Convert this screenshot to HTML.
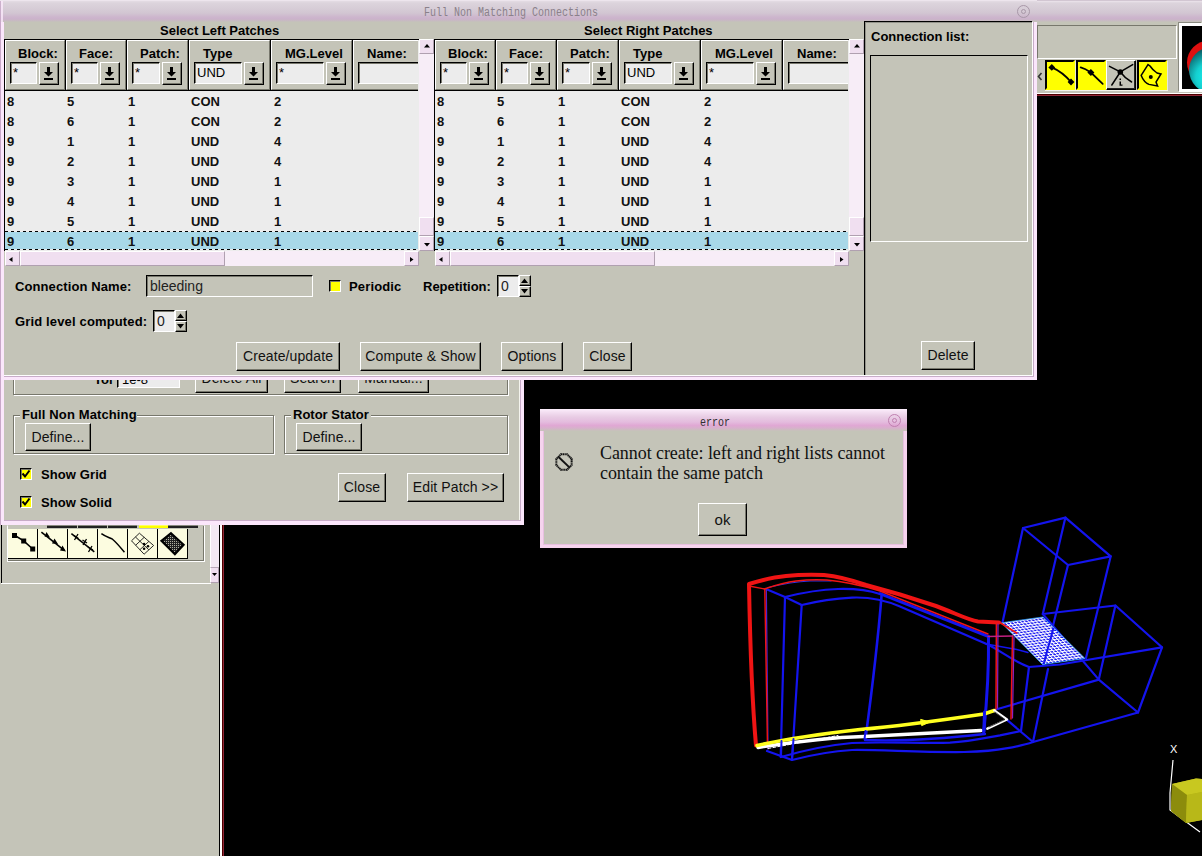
<!DOCTYPE html>
<html><head><meta charset="utf-8"><title>Full Non Matching Connections</title>
<style>
*{box-sizing:border-box;margin:0;padding:0}
html,body{width:1202px;height:856px;overflow:hidden;background:#c4c4b8}
body{position:relative;font-family:"Liberation Sans",sans-serif;font-size:13px;color:#000}
.a{position:absolute}
.b{position:absolute;font-weight:bold;font-size:13px;white-space:nowrap;line-height:15px}
.btn{position:absolute;background:#c4c4b8;border:1px solid;border-color:#fff #000 #000 #fff;box-shadow:inset -1px -1px 0 #77776c;font-size:14px;text-align:center;white-space:nowrap;color:#111;letter-spacing:0.1px}
.sunk{position:absolute;background:#ececec;border:1px solid;border-color:#000 #fff #fff #000;box-shadow:inset 1px 1px 0 #77776c;font-size:13px;white-space:nowrap;overflow:hidden}
.hc{position:absolute;top:40px;height:50px;background:#c4c4b8;border:1px solid;border-color:#fff #77776c #77776c #fff}
.pb{position:absolute;background:#f0dff0;border:1px solid;border-color:#fff #b0a0b0 #b0a0b0 #fff}
.trk{position:absolute;background:#f7edf7}
.row{position:absolute;left:0;width:100%;height:20px;font-weight:bold;font-size:13px;line-height:20px;white-space:nowrap;color:#111}
.row span{position:absolute;top:0}
.grp{position:absolute;border:1px solid;border-color:#77776c #fff #fff #77776c;box-shadow:inset 1px 1px 0 #fff,1px 1px 0 #fff inset}
.groove{position:absolute;border:1px solid #77776c;box-shadow:1px 1px 0 #fff,inset 1px 1px 0 #fff}
.mono{position:absolute;font-family:"Liberation Mono",monospace;font-size:12px;line-height:14px;white-space:nowrap;transform:scaleX(0.8333);transform-origin:0 0}
.chk{position:absolute;width:12px;height:12px;background:#ffff00;border:1px solid;border-color:#000 #fff #fff #000;box-shadow:inset 1px 1px 0 #77776c}
</style></head>
<body>
<div class="a" style="left:1037px;top:0;width:165px;height:22px;background:linear-gradient(#b8a8b8 0,#ece4ec 1px,#dcd4dc 3px,#d2c6d2 13px,#cdb6cd 17px,#cbb2cb 19px,#c6bcc0 21px,#c4c4b8 22px)"></div>
<div class="a" style="left:1037px;top:25px;width:140px;height:34px;border:1px solid;border-color:#77776c #fff #fff #77776c"></div>
<svg class="a" style="left:1037px;top:72px" width="6" height="9"><path d="M4.5 1L1.5 4.5L4.5 8" stroke="#333" stroke-width="1.6" fill="none"/></svg>
<div class="a" style="left:1045px;top:60px;width:30px;height:30px;background:#ffff00;border:2px solid;border-color:#000 #ffff00 #ffff00 #000;box-shadow:1px 1px 0 #e8e8d8"></div>
<div class="a" style="left:1076px;top:60px;width:30px;height:30px;background:#ffff00;border:2px solid;border-color:#000 #ffff00 #ffff00 #000;box-shadow:1px 1px 0 #e8e8d8"></div>
<div class="a" style="left:1106px;top:60px;width:30px;height:30px;background:#c4c4b8;border:1px solid;border-color:#fff #000 #000 #fff;box-shadow:inset -1px -1px 0 #222"></div>
<div class="a" style="left:1137px;top:60px;width:30px;height:30px;background:#ffff00;border:2px solid;border-color:#000 #ffff00 #ffff00 #000;box-shadow:1px 1px 0 #e8e8d8"></div>
<svg class="a" style="left:1045px;top:60px" width="125" height="30" viewBox="0 0 125 30">
<g stroke="#000" fill="none" stroke-width="1.8" stroke-linecap="round">
<path d="M6.8 7.4 C14 10.5 20 15 26 22"/>
<path d="M35.7 7.4 C40 8.5 43 10.5 45.9 12.5 L57.7 23.8"/>
<path d="M64.5 6.3 L75.3 12 L87.7 4.6 M75.3 12 L66.8 25 M75.3 12 C79 17 83 20 86.6 22" stroke-width="1.5"/>
<path d="M103 4.6 L96.2 15.4 C98 20 101 23 104 24.4 L112.6 26 L111 22 L116 14 L112 13 C109 11 107 9 105 6 Z" stroke-width="1.5"/>
</g>
<g fill="#000"><path d="M6.8 4l3.4 3.4-3.4 3.4-3.4-3.4z" /><path d="M26 18.6l3.4 3.4-3.4 3.4-3.4-3.4z"/><path d="M45.9 9l3.5 3.5-3.5 3.5-3.5-3.5z"/><circle cx="75.3" cy="12" r="2.8"/><circle cx="105.8" cy="17" r="2"/><rect x="74.5" y="18.5" width="1.5" height="1.5"/><path d="M74.5 21.5h1.5v3h1.5v1.2h-3z"/></g>
</svg>
<div class="a" style="left:1179px;top:23px;width:23px;height:69px;background:#000;border:3px solid #fff;border-right:0;box-shadow:-1px -1px 0 #8a8a80"></div>
<svg class="a" style="left:1182px;top:26px" width="20" height="63" viewBox="1182 26 20 63">
<defs><radialGradient id="gl" cx="0.45" cy="0.65" r="0.6"><stop offset="0" stop-color="#18f4f4"/><stop offset="0.5" stop-color="#14d0d0"/><stop offset="1" stop-color="#0c6068"/></radialGradient></defs>
<circle cx="1209" cy="62.5" r="22" fill="#e01010"/><circle cx="1212" cy="70" r="23" fill="url(#gl)"/></svg>
<div class="a" style="left:1045px;top:90px;width:123px;height:1px;background:#f4f4ec"></div>
<div class="a" style="left:1037px;top:93px;width:165px;height:1px;background:#fff"></div>
<div class="a" style="left:219px;top:96px;width:983px;height:760px;background:#000"></div>
<div class="a" style="left:1037px;top:94px;width:165px;height:1px;background:#500000"></div>
<div class="a" style="left:1037px;top:95px;width:165px;height:1px;background:#902838"></div>
<div class="a" style="left:220px;top:96px;width:2px;height:760px;background:#fff"></div>
<div class="a" style="left:222px;top:96px;width:1px;height:760px;background:#500000"></div>
<div class="a" style="left:223px;top:96px;width:1px;height:760px;background:#902838"></div>
<div class="a" style="left:1px;top:525px;width:1px;height:58px;background:#000"></div>
<div class="a" style="left:1px;top:583px;width:210px;height:1px;background:#fff"></div>
<div class="a" style="left:7px;top:525px;width:198px;height:37px;border:1px solid;border-color:transparent #fff #fff #fff;box-shadow:inset -1px -1px 0 #77776c"></div>
<div class="a" style="left:47px;top:525px;width:30px;height:3px;background:#222;border-top:1px solid #8a8a80"></div>
<div class="a" style="left:78px;top:525px;width:29px;height:3px;background:#222;border-top:1px solid #8a8a80"></div>
<div class="a" style="left:108px;top:525px;width:29px;height:3px;background:#222;border-top:1px solid #8a8a80"></div>
<div class="a" style="left:139px;top:525px;width:29px;height:3px;background:#ffff00;border-top:1px solid #ffff60"></div>
<div class="a" style="left:168px;top:525px;width:30px;height:3px;background:#222;border-top:1px solid #8a8a80"></div>
<div class="a" style="left:8px;top:529px;width:30px;height:30px;background:#fcfce0;border-right:1px solid #000;border-bottom:1px solid #000"></div>
<div class="a" style="left:38px;top:529px;width:30px;height:30px;background:#fcfce0;border-right:1px solid #000;border-bottom:1px solid #000"></div>
<div class="a" style="left:68px;top:529px;width:30px;height:30px;background:#fcfce0;border-right:1px solid #000;border-bottom:1px solid #000"></div>
<div class="a" style="left:98px;top:529px;width:30px;height:30px;background:#fcfce0;border-right:1px solid #000;border-bottom:1px solid #000"></div>
<div class="a" style="left:128px;top:529px;width:30px;height:30px;background:#fcfce0;border-right:1px solid #000;border-bottom:1px solid #000"></div>
<div class="a" style="left:158px;top:529px;width:30px;height:30px;background:#fcfce0;border-right:1px solid #000;border-bottom:1px solid #000"></div>
<svg class="a" style="left:8px;top:529px" width="180" height="30" viewBox="0 0 180 30">
<defs><pattern id="hz" width="2" height="2" patternUnits="userSpaceOnUse"><rect width="2" height="2" fill="#222"/><rect width="1" height="1" fill="#b0b0a0"/></pattern></defs>
<g stroke="#000" fill="none">
<path d="M6.5 6.3 L15.7 11.8 L24.7 20" stroke-width="1.6"/>
<path d="M33.4 3.1 L56.3 21.3" stroke-width="1.6"/>
<path d="M63.4 4.7 L86.3 22.9" stroke-width="1.5"/>
<path d="M66 6.5l4.5 3M70 5l-3.5 6 M74.5 11l4.5 3M78.5 10l-3.5 6 M80 18l5 3M84 17l-3.5 6" stroke-width="1.3"/>
<path d="M93.4 4.7 C98 8 101 8.5 104.5 10.2 C109 14 113 19 116.4 23.2" stroke-width="1.5"/>
<path d="M131.4 4.2 L145.6 16.5 L136.1 25.2 L123.5 11.8 Z M127.5 8 L140.8 20.8 M127.7 16.2 L136.2 8.3 M131.9 20.7 L140.9 12.4" stroke-width="0.9" stroke="#111"/>
<path d="M163 4.2 L175.6 15.8 L166.9 25.2 L153.5 11.8 Z" stroke-width="2.2" fill="url(#hz)"/>
</g>
<g fill="#000"><rect x="4" y="4" width="5" height="5"/><rect x="13.2" y="9.5" width="5" height="5"/><rect x="22.2" y="17.5" width="5" height="5"/>
<path d="M36.5 7.5l2-4.5 3.5 5.5z M44 14.5l2.5-5 3.5 5.5z M52 21.5l2.5-5 3.5 6z"/>
<circle cx="136.1" cy="15" r="1.3"/><circle cx="140" cy="17.3" r="1.3"/><circle cx="136.1" cy="19.7" r="1.3"/></g>
</svg>
<div class="a" style="left:210px;top:525px;width:9px;height:58px;background:#f3e8f3;border-left:1px solid #fff"></div>
<div class="a" style="left:210px;top:567px;width:9px;height:16px;background:#f0dff0;border:1px solid;border-color:#b8a8b8 #b0a0b0 #b0a0b0 #fff"></div>
<svg class="a" style="left:211px;top:572px" width="7" height="5"><path d="M1 1h5l-2.5 3z" fill="#000"/></svg>
<div class="a" style="left:0;top:370px;width:524px;height:155px;background:#c4c4b8;border:4px solid #fbe6fb;border-top:0"></div>
<div class="a" style="left:4px;top:520px;width:517px;height:1px;background:#c8acc8"></div>
<div class="a" style="left:520px;top:370px;width:1px;height:151px;background:#c8acc8"></div>
<div class="a" style="left:519px;top:370px;width:1px;height:150px;background:#f4f4ee"></div>
<div class="a" style="left:0;top:370px;width:1px;height:155px;background:#c8a8c8"></div>
<div class="groove" style="left:13px;top:360px;width:495px;height:35px"></div>
<div class="b" style="left:94px;top:372px">Tol</div>
<div class="sunk" style="left:117px;top:366px;width:63px;height:22px;padding:5px 0 0 4px">1e-8</div>
<div class="btn" style="left:195px;top:364px;width:73px;height:29px;line-height:27px">Delete All</div>
<div class="btn" style="left:284px;top:364px;width:57px;height:29px;line-height:27px">Search</div>
<div class="btn" style="left:358px;top:364px;width:71px;height:29px;line-height:27px">Manual...</div>
<div class="groove" style="left:13px;top:415px;width:261px;height:39px"></div>
<div class="b" style="left:20px;top:407px;background:#c4c4b8;padding:0 0 0 2px;letter-spacing:0.12px">Full Non Matching</div>
<div class="btn" style="left:25px;top:423px;width:66px;height:28px;line-height:27px">Define...</div>
<div class="groove" style="left:284px;top:415px;width:224px;height:39px"></div>
<div class="b" style="left:291px;top:407px;background:#c4c4b8;padding:0 2px">Rotor Stator</div>
<div class="btn" style="left:296px;top:423px;width:66px;height:28px;line-height:27px">Define...</div>
<div class="chk" style="left:20px;top:468px"></div>
<svg class="a" style="left:20px;top:468px" width="12" height="12"><path d="M2.5 5.5l2.5 3 4.5-6" stroke="#000" stroke-width="2" fill="none"/></svg>
<div class="b" style="left:41px;top:467px;letter-spacing:0.1px">Show Grid</div>
<div class="chk" style="left:20px;top:496px"></div>
<svg class="a" style="left:20px;top:496px" width="12" height="12"><path d="M2.5 5.5l2.5 3 4.5-6" stroke="#000" stroke-width="2" fill="none"/></svg>
<div class="b" style="left:41px;top:495px;letter-spacing:0.1px">Show Solid</div>
<div class="btn" style="left:338px;top:473px;width:48px;height:29px;line-height:27px">Close</div>
<div class="btn" style="left:407px;top:473px;width:97px;height:29px;line-height:27px">Edit Patch &gt;&gt;</div>
<div class="a" style="left:0;top:0;width:1037px;height:380px;background:#c4c4b8;border:4px solid #fbe6fb;border-top:0"></div>
<div class="a" style="left:4px;top:376px;width:1030px;height:1px;background:#c8acc8"></div>
<div class="a" style="left:1033px;top:22px;width:1px;height:355px;background:#c8acc8"></div>
<div class="a" style="left:0;top:0;width:1px;height:380px;background:#c8a8c8"></div>
<div class="a" style="left:4px;top:375px;width:1029px;height:1px;background:#fff"></div>
<div class="a" style="left:1032px;top:22px;width:1px;height:354px;background:#fff"></div>
<div class="a" style="left:0;top:0;width:1037px;height:22px;background:linear-gradient(#f6eef6 0,#e4dce4 1px,#dcd4dc 3px,#d2c6d2 13px,#cdb6cd 17px,#cbb2cb 19px,#c6bcc0 21px,#c4c4b8 22px)"></div>
<div class="a" style="left:0;top:1px;width:3px;height:21px;background:linear-gradient(90deg,#c8a8c8 0 1px,#fbe8fb 1px 3px);opacity:0.8"></div>
<div class="mono" style="left:424px;top:6px;color:#8a808a">Full Non Matching Connections</div>
<svg class="a" style="left:1016px;top:4px" width="15" height="15"><circle cx="7.5" cy="7.5" r="6" fill="none" stroke="#a898a8" stroke-width="1"/><circle cx="7.5" cy="7.5" r="2" fill="none" stroke="#a898a8" stroke-width="1"/></svg>
<div class="b" style="left:160px;top:23px">Select Left Patches</div>
<div class="a" style="left:4px;top:39px;width:415px;height:212px;background:#ececec;border-left:1px solid #000;border-top:1px solid #000"></div>
<div class="a" style="left:5px;top:40px;width:413px;height:51px;background:#000;overflow:hidden"></div>
<div class="hc" style="left:5px;width:60px"></div>
<div class="b" style="left:18px;top:46px">Block:</div>
<div class="sunk" style="left:10px;top:62px;width:27px;height:22px;padding:2px 0 0 2px">*</div>
<div class="btn" style="left:39px;top:62px;width:20px;height:23px"></div>
<svg class="a" style="left:39px;top:62px" width="20" height="23" viewBox="0 0 20 23"><path d="M8 5h3v5h3l-4.5 4.5L5 10h3z" fill="#000"/><rect x="5" y="16" width="9" height="2" fill="#000"/></svg>
<div class="hc" style="left:66px;width:60px"></div>
<div class="b" style="left:79px;top:46px">Face:</div>
<div class="sunk" style="left:71px;top:62px;width:27px;height:22px;padding:2px 0 0 2px">*</div>
<div class="btn" style="left:100px;top:62px;width:20px;height:23px"></div>
<svg class="a" style="left:100px;top:62px" width="20" height="23" viewBox="0 0 20 23"><path d="M8 5h3v5h3l-4.5 4.5L5 10h3z" fill="#000"/><rect x="5" y="16" width="9" height="2" fill="#000"/></svg>
<div class="hc" style="left:127px;width:61px"></div>
<div class="b" style="left:140px;top:46px">Patch:</div>
<div class="sunk" style="left:132px;top:62px;width:28px;height:22px;padding:2px 0 0 2px">*</div>
<div class="btn" style="left:162px;top:62px;width:20px;height:23px"></div>
<svg class="a" style="left:162px;top:62px" width="20" height="23" viewBox="0 0 20 23"><path d="M8 5h3v5h3l-4.5 4.5L5 10h3z" fill="#000"/><rect x="5" y="16" width="9" height="2" fill="#000"/></svg>
<div class="hc" style="left:189px;width:81px"></div>
<div class="b" style="left:203px;top:46px">Type</div>
<div class="sunk" style="left:194px;top:62px;width:48px;height:22px;padding:2px 0 0 2px">UND</div>
<div class="btn" style="left:244px;top:62px;width:20px;height:23px"></div>
<svg class="a" style="left:244px;top:62px" width="20" height="23" viewBox="0 0 20 23"><path d="M8 5h3v5h3l-4.5 4.5L5 10h3z" fill="#000"/><rect x="5" y="16" width="9" height="2" fill="#000"/></svg>
<div class="hc" style="left:271px;width:81px"></div>
<div class="b" style="left:285px;top:46px">MG.Level</div>
<div class="sunk" style="left:276px;top:62px;width:48px;height:22px;padding:2px 0 0 2px">*</div>
<div class="btn" style="left:326px;top:62px;width:20px;height:23px"></div>
<svg class="a" style="left:326px;top:62px" width="20" height="23" viewBox="0 0 20 23"><path d="M8 5h3v5h3l-4.5 4.5L5 10h3z" fill="#000"/><rect x="5" y="16" width="9" height="2" fill="#000"/></svg>
<div class="hc" style="left:353px;width:65px;border-right:0"></div>
<div class="b" style="left:367px;top:46px">Name:</div>
<div class="sunk" style="left:358px;top:62px;width:60px;height:22px;border-right:0"></div>
<div class="a" style="left:5px;top:91px;width:413px;height:160px;overflow:hidden">
<div class="row" style="top:1px"><span style="left:2px">8</span><span style="left:62px">5</span><span style="left:123px">1</span><span style="left:186px">CON</span><span style="left:269px">2</span></div>
<div class="row" style="top:21px"><span style="left:2px">8</span><span style="left:62px">6</span><span style="left:123px">1</span><span style="left:186px">CON</span><span style="left:269px">2</span></div>
<div class="row" style="top:41px"><span style="left:2px">9</span><span style="left:62px">1</span><span style="left:123px">1</span><span style="left:186px">UND</span><span style="left:269px">4</span></div>
<div class="row" style="top:61px"><span style="left:2px">9</span><span style="left:62px">2</span><span style="left:123px">1</span><span style="left:186px">UND</span><span style="left:269px">4</span></div>
<div class="row" style="top:81px"><span style="left:2px">9</span><span style="left:62px">3</span><span style="left:123px">1</span><span style="left:186px">UND</span><span style="left:269px">1</span></div>
<div class="row" style="top:101px"><span style="left:2px">9</span><span style="left:62px">4</span><span style="left:123px">1</span><span style="left:186px">UND</span><span style="left:269px">1</span></div>
<div class="row" style="top:121px"><span style="left:2px">9</span><span style="left:62px">5</span><span style="left:123px">1</span><span style="left:186px">UND</span><span style="left:269px">1</span></div>
<div class="row" style="top:141px;height:19px;top:140px;line-height:21px;background:linear-gradient(90deg,#000 50%,transparent 50%) 0 0/6px 1px repeat-x,linear-gradient(90deg,#000 50%,transparent 50%) 0 100%/6px 1px repeat-x,linear-gradient(#ececec,#ececec) 0 0/100% 1px no-repeat,linear-gradient(#ececec,#ececec) 0 100%/100% 1px no-repeat,#a8d8e8"><span style="left:2px">9</span><span style="left:62px">6</span><span style="left:123px">1</span><span style="left:186px">UND</span><span style="left:269px">1</span></div>
</div>
<div class="trk" style="left:419px;top:39px;width:15px;height:212px"></div>
<div class="pb" style="left:419px;top:39px;width:15px;height:15px"></div>
<svg class="a" style="left:424px;top:44px" width="6" height="4"><path d="M0 3.5h6l-3-3.5z" fill="#000"/></svg>
<div class="pb" style="left:419px;top:217px;width:15px;height:19px"></div>
<div class="pb" style="left:419px;top:236px;width:15px;height:15px"></div>
<svg class="a" style="left:424px;top:243px" width="6" height="4"><path d="M0 0h6l-3 3.5z" fill="#000"/></svg>
<div class="trk" style="left:5px;top:251px;width:414px;height:15px"></div>
<div class="pb" style="left:5px;top:251px;width:15px;height:15px"></div>
<svg class="a" style="left:9px;top:257px" width="4" height="5"><path d="M3.5 0v5l-3.5-2.5z" fill="#000"/></svg>
<div class="pb" style="left:20px;top:251px;width:205px;height:15px"></div>
<div class="pb" style="left:404px;top:251px;width:15px;height:15px"></div>
<svg class="a" style="left:410px;top:257px" width="4" height="5"><path d="M0 0v5l3.5-2.5z" fill="#000"/></svg>
<div class="b" style="left:584px;top:23px">Select Right Patches</div>
<div class="a" style="left:434px;top:39px;width:415px;height:212px;background:#ececec;border-left:1px solid #000;border-top:1px solid #000"></div>
<div class="a" style="left:435px;top:40px;width:413px;height:51px;background:#000;overflow:hidden"></div>
<div class="hc" style="left:435px;width:60px"></div>
<div class="b" style="left:448px;top:46px">Block:</div>
<div class="sunk" style="left:440px;top:62px;width:27px;height:22px;padding:2px 0 0 2px">*</div>
<div class="btn" style="left:469px;top:62px;width:20px;height:23px"></div>
<svg class="a" style="left:469px;top:62px" width="20" height="23" viewBox="0 0 20 23"><path d="M8 5h3v5h3l-4.5 4.5L5 10h3z" fill="#000"/><rect x="5" y="16" width="9" height="2" fill="#000"/></svg>
<div class="hc" style="left:496px;width:60px"></div>
<div class="b" style="left:509px;top:46px">Face:</div>
<div class="sunk" style="left:501px;top:62px;width:27px;height:22px;padding:2px 0 0 2px">*</div>
<div class="btn" style="left:530px;top:62px;width:20px;height:23px"></div>
<svg class="a" style="left:530px;top:62px" width="20" height="23" viewBox="0 0 20 23"><path d="M8 5h3v5h3l-4.5 4.5L5 10h3z" fill="#000"/><rect x="5" y="16" width="9" height="2" fill="#000"/></svg>
<div class="hc" style="left:557px;width:61px"></div>
<div class="b" style="left:570px;top:46px">Patch:</div>
<div class="sunk" style="left:562px;top:62px;width:28px;height:22px;padding:2px 0 0 2px">*</div>
<div class="btn" style="left:592px;top:62px;width:20px;height:23px"></div>
<svg class="a" style="left:592px;top:62px" width="20" height="23" viewBox="0 0 20 23"><path d="M8 5h3v5h3l-4.5 4.5L5 10h3z" fill="#000"/><rect x="5" y="16" width="9" height="2" fill="#000"/></svg>
<div class="hc" style="left:619px;width:81px"></div>
<div class="b" style="left:633px;top:46px">Type</div>
<div class="sunk" style="left:624px;top:62px;width:48px;height:22px;padding:2px 0 0 2px">UND</div>
<div class="btn" style="left:674px;top:62px;width:20px;height:23px"></div>
<svg class="a" style="left:674px;top:62px" width="20" height="23" viewBox="0 0 20 23"><path d="M8 5h3v5h3l-4.5 4.5L5 10h3z" fill="#000"/><rect x="5" y="16" width="9" height="2" fill="#000"/></svg>
<div class="hc" style="left:701px;width:81px"></div>
<div class="b" style="left:715px;top:46px">MG.Level</div>
<div class="sunk" style="left:706px;top:62px;width:48px;height:22px;padding:2px 0 0 2px">*</div>
<div class="btn" style="left:756px;top:62px;width:20px;height:23px"></div>
<svg class="a" style="left:756px;top:62px" width="20" height="23" viewBox="0 0 20 23"><path d="M8 5h3v5h3l-4.5 4.5L5 10h3z" fill="#000"/><rect x="5" y="16" width="9" height="2" fill="#000"/></svg>
<div class="hc" style="left:783px;width:65px;border-right:0"></div>
<div class="b" style="left:797px;top:46px">Name:</div>
<div class="sunk" style="left:788px;top:62px;width:60px;height:22px;border-right:0"></div>
<div class="a" style="left:435px;top:91px;width:413px;height:160px;overflow:hidden">
<div class="row" style="top:1px"><span style="left:2px">8</span><span style="left:62px">5</span><span style="left:123px">1</span><span style="left:186px">CON</span><span style="left:269px">2</span></div>
<div class="row" style="top:21px"><span style="left:2px">8</span><span style="left:62px">6</span><span style="left:123px">1</span><span style="left:186px">CON</span><span style="left:269px">2</span></div>
<div class="row" style="top:41px"><span style="left:2px">9</span><span style="left:62px">1</span><span style="left:123px">1</span><span style="left:186px">UND</span><span style="left:269px">4</span></div>
<div class="row" style="top:61px"><span style="left:2px">9</span><span style="left:62px">2</span><span style="left:123px">1</span><span style="left:186px">UND</span><span style="left:269px">4</span></div>
<div class="row" style="top:81px"><span style="left:2px">9</span><span style="left:62px">3</span><span style="left:123px">1</span><span style="left:186px">UND</span><span style="left:269px">1</span></div>
<div class="row" style="top:101px"><span style="left:2px">9</span><span style="left:62px">4</span><span style="left:123px">1</span><span style="left:186px">UND</span><span style="left:269px">1</span></div>
<div class="row" style="top:121px"><span style="left:2px">9</span><span style="left:62px">5</span><span style="left:123px">1</span><span style="left:186px">UND</span><span style="left:269px">1</span></div>
<div class="row" style="top:141px;height:19px;top:140px;line-height:21px;background:linear-gradient(90deg,#000 50%,transparent 50%) 0 0/6px 1px repeat-x,linear-gradient(90deg,#000 50%,transparent 50%) 0 100%/6px 1px repeat-x,linear-gradient(#ececec,#ececec) 0 0/100% 1px no-repeat,linear-gradient(#ececec,#ececec) 0 100%/100% 1px no-repeat,#a8d8e8"><span style="left:2px">9</span><span style="left:62px">6</span><span style="left:123px">1</span><span style="left:186px">UND</span><span style="left:269px">1</span></div>
</div>
<div class="trk" style="left:849px;top:39px;width:15px;height:212px"></div>
<div class="pb" style="left:849px;top:39px;width:15px;height:15px"></div>
<svg class="a" style="left:854px;top:44px" width="6" height="4"><path d="M0 3.5h6l-3-3.5z" fill="#000"/></svg>
<div class="pb" style="left:849px;top:217px;width:15px;height:19px"></div>
<div class="pb" style="left:849px;top:236px;width:15px;height:15px"></div>
<svg class="a" style="left:854px;top:243px" width="6" height="4"><path d="M0 0h6l-3 3.5z" fill="#000"/></svg>
<div class="trk" style="left:435px;top:251px;width:414px;height:15px"></div>
<div class="pb" style="left:435px;top:251px;width:15px;height:15px"></div>
<svg class="a" style="left:439px;top:257px" width="4" height="5"><path d="M3.5 0v5l-3.5-2.5z" fill="#000"/></svg>
<div class="pb" style="left:450px;top:251px;width:205px;height:15px"></div>
<div class="pb" style="left:834px;top:251px;width:15px;height:15px"></div>
<svg class="a" style="left:840px;top:257px" width="4" height="5"><path d="M0 0v5l3.5-2.5z" fill="#000"/></svg>
<div class="b" style="left:15px;top:279px;letter-spacing:0.1px">Connection Name:</div>
<div class="sunk" style="left:146px;top:275px;width:167px;height:22px;background:#c4c4b8;font-size:14px;padding:2px 0 0 3px;color:#222">bleeding</div>
<div class="chk" style="left:329px;top:280px"></div>
<div class="b" style="left:349px;top:279px;letter-spacing:0.15px">Periodic</div>
<div class="b" style="left:423px;top:279px">Repetition:</div>
<div class="sunk" style="left:497px;top:275px;width:22px;height:22px;font-size:14px;padding:2px 0 0 3px;color:#222">0</div>
<div class="btn" style="left:519px;top:275px;width:12px;height:11px"></div>
<div class="btn" style="left:519px;top:286px;width:12px;height:11px"></div>
<svg class="a" style="left:521px;top:277px" width="8" height="18"><path d="M0 6h7l-3.5-4.5z M0 12h7l-3.5 4.5z" fill="#000"/></svg>
<div class="b" style="left:15px;top:314px;letter-spacing:0.15px">Grid level computed:</div>
<div class="sunk" style="left:153px;top:310px;width:22px;height:22px;font-size:14px;padding:2px 0 0 3px;color:#222">0</div>
<div class="btn" style="left:175px;top:310px;width:12px;height:11px"></div>
<div class="btn" style="left:175px;top:321px;width:12px;height:11px"></div>
<svg class="a" style="left:177px;top:312px" width="8" height="18"><path d="M0 6h7l-3.5-4.5z M0 12h7l-3.5 4.5z" fill="#000"/></svg>
<div class="btn" style="left:236px;top:342px;width:104px;height:29px;line-height:27px">Create/update</div>
<div class="btn" style="left:360px;top:342px;width:121px;height:29px;line-height:27px">Compute &amp; Show</div>
<div class="btn" style="left:501px;top:342px;width:62px;height:29px;line-height:27px">Options</div>
<div class="btn" style="left:583px;top:342px;width:49px;height:29px;line-height:27px">Close</div>
<div class="a" style="left:864px;top:21px;width:168px;height:354px;border-left:1px solid #000;border-top:1px solid #000;box-shadow:inset 1px 1px 0 rgba(0,0,0,0.25)"></div>
<div class="b" style="left:871px;top:29px">Connection list:</div>
<div class="a" style="left:870px;top:55px;width:158px;height:187px;border:1px solid;border-color:#000 #fff #fff #000"></div>
<div class="btn" style="left:921px;top:341px;width:54px;height:29px;line-height:27px">Delete</div>
<div class="a" style="left:540px;top:409px;width:367px;height:139px;background:#c4c4b8;border:3px solid #f6d4ee;box-shadow:inset 1px 1px 0 #e8c0e0,inset -1px -1px 0 #e8c0e0"></div>
<div class="a" style="left:540px;top:409px;width:367px;height:22px;background:linear-gradient(#fceefc 0,#f4e0f2 3px,#e8cce4 8px,#e4bcde 13px,#e0a8d4 16.5px,#d8b0cc 19px,#c8c0bc 21.5px)"></div>
<div class="mono" style="left:700px;top:416px;color:#303030">error</div>
<svg class="a" style="left:887px;top:413px" width="15" height="15"><circle cx="7.5" cy="7.5" r="6" fill="none" stroke="#c080b0" stroke-width="1"/><circle cx="7.5" cy="7.5" r="2" fill="none" stroke="#c080b0" stroke-width="1"/></svg>
<svg class="a" style="left:555px;top:453px" width="18" height="18" viewBox="0 0 20 20"><path d="M6.5 1.5h7l5 5v7l-5 5h-7l-5-5v-7z" fill="none" stroke="#111" stroke-width="2.2" stroke-dasharray="1.5 0.5"/><path d="M4 4.5L16 16" stroke="#111" stroke-width="2.2"/></svg>
<div class="a" style="left:600px;top:443px;font-family:'Liberation Serif',serif;font-size:18px;line-height:20px;color:#111;white-space:nowrap;letter-spacing:-0.07px">Cannot create: left and right lists cannot<br>contain the same patch</div>
<div class="btn" style="left:698px;top:503px;width:49px;height:33px;line-height:31px;font-size:15px">ok</div>
<svg class="a" style="left:700px;top:490px" width="502" height="366" viewBox="700 490 502 366">
<defs>
<pattern id="mesh" width="1" height="1" patternUnits="userSpaceOnUse" patternTransform="matrix(3.47 -0.48 2.26 2.32 1001.4 622.8)">
<rect width="1" height="1" fill="#1818f0"/><path d="M0 0.15H1M0.15 0V1" stroke="#fff" stroke-width="0.4"/>
</pattern>
</defs>
<g fill="none" stroke="#1414ee" stroke-width="2.2" stroke-linejoin="round" stroke-linecap="round">
<!-- upper box -->
<path d="M1023 528L1065.4 517.6L1110.7 556.3L1068 565Z"/>
<path d="M1023 528L1002.6 622M1065.4 517.6L1042.8 614M1110.7 556.3L1086 658M1068 565L1043.6 664"/>
<!-- lower box -->
<path d="M1042.8 614L1115.4 605.5L1162 647.3L1138 712.5L1098.8 679.6Z" />
<path d="M1115.4 605.5L1098.8 679.6"/>
<path d="M1098.8 679.6L996 709.5"/>
<path d="M1138 712.5L1033 742"/>
<path d="M1006.7 719.7L1033 742L1048 669"/>
<path d="M1029 667L1021 731"/>
<path d="M1162 647.3L1060 664.5L1029 667C1012 661 1000 650 986.6 644L900 606.5C880 598 866 597 852 597.6C835 598.5 818 601 801.7 605"/>
<!-- main body upper curves -->
<path d="M766 589L785 597L801.7 605"/>
<path d="M785 597C805 592 822 589.5 838 589C853 588.6 868 590 880 594"/>
<path d="M768 587.5C782 584 796 581.5 810 581L831 581" stroke="#3030e0" stroke-width="1.2"/>
<path d="M785 597L780.7 757M801.7 605L792 760"/>
<path d="M766.3 590L768 749" stroke="#5020d0" stroke-width="1.3"/>
<!-- thick blue -->
<path d="M880 593.7L988 636.4" stroke-width="3"/>
<path d="M881.6 595C878 640 872 690 865.5 738.5" stroke-width="2.6"/>
<path d="M988.5 636.4C989 670 987 700 983.8 732" stroke-width="3"/>
<!-- bottom curves -->
<path d="M767 751L792 760C815 754 835 751 852 750C880 749.5 920 752.5 964 752C985 751.5 998 750 1006 748.4C1017 746.5 1026 744.5 1033 742"/>
<path d="M781 757C805 750 830 745 852 743C880 741.5 920 743.5 950 742.7C970 741.5 985 738 1000 735.4L1021 731"/>
<path d="M865 740C900 741.5 940 739 985 734" stroke-width="2.4"/>
<path d="M986 644L1016.8 649.5L1028 652.5" stroke-width="1.3"/>
</g>
<!-- mesh -->
<path d="M1001.4 622.8L1043 617L1085 658.5L1042.5 664.5Z" fill="url(#mesh)" stroke="#30a0ff" stroke-width="0.8"/>
<g fill="none" stroke="#1414ee" stroke-width="2"><path d="M1053.5 628L1043.6 664"/></g>
<!-- red -->
<g fill="none" stroke="#f01414" stroke-linejoin="round" stroke-linecap="round">
<path d="M756 745.5C752 700 750 640 749 584C762 580 775 577 786 576C800 574.5 812 574.5 824 575C840 576.5 853 580.5 866 585L900 594.5L936 606C955 613 968 620 978 621.5L999 622.4" stroke-width="4"/>
<path d="M749 586L764.5 589C776 585 787 582 796 581C808 579.5 818 579.5 827 580C845 581.5 862 585.5 880 591L988 634" stroke-width="1.4"/>
<path d="M999 622L1016.7 633" stroke-width="1.8"/>
<path d="M764.8 589L767.5 747" stroke-width="1.4"/>
<path d="M996.4 622L996 709M1012.5 636L1011 719" stroke-width="1.5"/>
<path d="M988 636.5L1013 636" stroke="#c02080" stroke-width="1.4"/>
<path d="M998 624L997.5 708M1014 637L1012.5 718" stroke="#9020c0" stroke-width="1.2"/>
</g>
<!-- yellow / white -->
<g fill="none" stroke-linecap="round" stroke-linejoin="round">
<path d="M758 747.5C790 742.5 830 737.5 864 736.5L981 730.5" stroke="#fff" stroke-width="3.4"/>
<path d="M768 748.5L838 735.5" stroke="#fff" stroke-width="1" stroke-dasharray="3 2"/>
<path d="M757 745.5C790 738 825 733.5 860 729.5C900 726 950 719 983.8 714L994.3 710.5" stroke="#ffff20" stroke-width="3.6"/>
<path d="M921 719.5L930 722L922 725.5Z" fill="#ffff20" stroke="#ffff20" stroke-width="1"/>
<path d="M994.3 710.5L1007 719.5L987.3 728.7" stroke="#fff" stroke-width="2.4"/>
<path d="M995 712L1005 719.5L989 727" stroke="#000" stroke-width="0.7"/>
<path d="M865.5 731L864.5 739M781.5 741L781 757M793.5 739L792 759" stroke="#1414ee" stroke-width="2"/>
<path d="M984.5 712L983.8 732" stroke="#1414ee" stroke-width="3"/>
</g>
<!-- axis gizmo -->
<g>
<path d="M1173 760L1170 793L1170 810L1200 832" fill="none" stroke="#fff" stroke-width="1.2"/>
<path d="M1172 784L1196 778.5L1202 779L1202 820L1186 823L1171 811Z" fill="#b4b414"/>
<path d="M1172 784L1196 778.5L1202 779L1202 792L1187 795Z" fill="#c8c820"/>
<path d="M1172 784L1187 795L1186 823L1171 811Z" fill="#8c8c0c"/>
<path d="M1187 795L1202 792L1202 820L1186 823Z" fill="#b8b818"/>
<text x="1170" y="753" font-family="Liberation Sans,sans-serif" font-size="11" fill="#fff">X</text>
</g>
</svg>

</body></html>
